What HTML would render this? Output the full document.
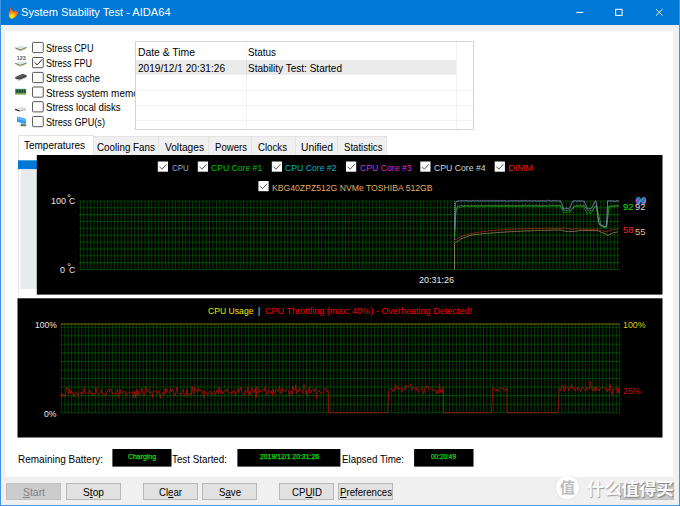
<!DOCTYPE html>
<html><head><meta charset="utf-8"><title>System Stability Test - AIDA64</title>
<style>
html,body{margin:0;padding:0}
body{width:680px;height:506px;position:relative;overflow:hidden;background:#f0f0f0;font-family:"Liberation Sans", sans-serif;}
.abs,.t,.cb,.btn,.box{position:absolute}
.t{white-space:nowrap;transform-origin:0 50%;}
u{text-decoration:underline;text-underline-offset:1px;text-decoration-thickness:.7px}
#title{left:0;top:0;width:680px;height:24.5px;background:#0078d7}
#frame{left:0;top:0;width:678px;height:505px;border:1px solid #3f95e0;border-top:none}
#panel{left:5.5px;top:31.5px;width:667.5px;height:445.5px;background:#fff}
.cb{left:32.1px;width:9.6px;height:9.2px;border:1px solid #3c3c3c;background:#fff;border-radius:.8px}
#list{z-index:2;left:134.5px;top:41.2px;width:337.5px;height:86.8px;border:1px solid #d4d4d4;background:#fff;overflow:hidden}
.btn{top:483px;height:14.6px;border:1px solid #b8b8b8;background:#e1e1e1}
.box{top:449px;height:17.4px;background:#000}
.tab{position:absolute;top:136.3px;height:18.2px;border:1px solid #e4e4e4;border-bottom:none;border-left:none;background:#f0f0f0}
</style></head><body>
<div class="abs" id="title"></div>
<div class="abs" id="frame"></div>
<svg class="abs" style="left:0;top:0" width="680" height="506" viewBox="0 0 680 506"><rect x="5.500" y="31.400" width="667.600" height="445.400" fill="#fff"/></svg>
<svg class="abs" style="left:0;top:0" width="680" height="25" viewBox="0 0 680 25">
<defs><radialGradient id="fl" cx="12.2" cy="16.6" r="8.5" gradientUnits="userSpaceOnUse"><stop offset="0" stop-color="#fff000"/><stop offset=".22" stop-color="#ffd200"/><stop offset=".5" stop-color="#ff8a12"/><stop offset="1" stop-color="#f2481c"/></radialGradient></defs>
<path d="M10.300 6.200C10.800 8.600 12.200 10.200 13.700 12.300L15.400 9.500L15.900 12L18.300 10.400C18.400 13 17.100 15.500 14.600 17.300C13.500 18.200 12.500 18.900 11.600 18.800C10.100 18.300 8.600 16.800 8.800 15L9.300 13.700L8.200 12.700L9.600 12.200C10 10.500 10.200 8.500 10.300 6.200Z" fill="url(#fl)"/>
<path d="M576.200 12.400h7.100" stroke="#fff" stroke-width="1" fill="none"/>
<rect x="615.700" y="9.300" width="6.400" height="6.100" stroke="#fff" stroke-width="1" fill="none"/>
<path d="M656 9.200l6.600 6.400M662.600 9.200l-6.600 6.400" stroke="#fff" stroke-width=".9" fill="none"/>
</svg>
<svg class="abs" style="left:0;top:36px" width="60" height="100" viewBox="0 36 60 100"><rect x="32.55" y="42.40" width="10.7" height="10.2" rx=".9" fill="#fff" stroke="#444" stroke-width=".9"/><rect x="32.55" y="57.50" width="10.7" height="10.2" rx=".9" fill="#fff" stroke="#444" stroke-width=".9"/><rect x="32.55" y="72.40" width="10.7" height="10.2" rx=".9" fill="#fff" stroke="#444" stroke-width=".9"/><rect x="32.55" y="87.00" width="10.7" height="10.2" rx=".9" fill="#fff" stroke="#444" stroke-width=".9"/><rect x="32.55" y="101.70" width="10.7" height="10.2" rx=".9" fill="#fff" stroke="#444" stroke-width=".9"/><rect x="32.55" y="116.50" width="10.7" height="10.2" rx=".9" fill="#fff" stroke="#444" stroke-width=".9"/></svg>
<svg class="abs" style="left:32px;top:56px" width="13" height="13" viewBox="0 0 13 13"><path d="M2.600 6.300l2.500 2.600l5-5.500" stroke="#222" stroke-width="1" fill="none"/></svg>
<svg class="abs" style="left:12px;top:40px" width="20" height="92" viewBox="12 40 20 92">
<path d="M15.200 47.800L21.400 45.300L26.600 47.400L20.500 49.900Z" fill="#dde5de"/>
<path d="M15.200 47.900L20.500 50L26.600 47.500" stroke="#3f6048" stroke-width=".9" fill="none"/>
<path d="M15.600 48.900L20.500 50.900L26.300 48.500" stroke="#d0ba78" stroke-width=".7" fill="none"/>
<text x="16.800" y="60.300" font-size="5.400" font-weight="bold" fill="#5a5a5a" font-family='"Liberation Sans", sans-serif'>123</text>
<path d="M15.200 63.300L21.400 61L26.600 62.900L20.500 65.300Z" fill="#dde5de"/>
<path d="M15.200 63.400L20.500 65.400L26.600 63" stroke="#3f6048" stroke-width=".9" fill="none"/>
<path d="M15.600 64.400L20.500 66.300L26.300 64" stroke="#d0ba78" stroke-width=".7" fill="none"/>
<path d="M15.200 77.300L22.300 74L26.600 75.200V77L19.600 79.800L15.200 78.600Z" fill="#3e3e3e"/>
<path d="M15.200 77.300L22.300 74L26.600 75.200L19.600 78.300Z" fill="#585858"/>
<path d="M16 79.400l3.500 1l7-2.800" stroke="#c4c4c4" stroke-width=".8" fill="none"/>
<rect x="15.100" y="88.800" width="11.100" height="5.600" fill="#3c9c62"/>
<path d="M16.300 89.800h1.900v3h-1.900zM18.900 89.800h1.900v3h-1.900zM21.500 89.800h1.900v3h-1.900zM24 89.800h1.500v3h-1.500z" fill="#2c3a30"/>
<path d="M15.600 93.600h4.600v.9h-4.600zM21.400 93.600h4.600v.9h-4.600z" fill="#c9a938"/>
<path d="M15.100 108.800L21.500 106.700L26.200 107.400V108.700L19.800 110.300Z" fill="#e4e4e4"/>
<path d="M15.100 108.800L19.800 110.300V111.600L15.100 110.300Z" fill="#2e2e2e"/>
<path d="M19.800 110.300L26.200 108.700V110L19.800 111.600Z" fill="#b8b8b8"/>
<path d="M17 116.400L25.900 118.800V124.200L17 121.800Z" fill="#2f9cf0"/>
<path d="M17.500 117.100L25.300 119.200V121.200L17.500 119.300Z" fill="#5cb8fa"/>
<path d="M21 123.400L26.200 124.600V126.200H20.300Z" fill="#5d7d68"/>
</svg>
<div class="abs" id="list">
<div class="abs" style="left:0;top:18px;width:320.500px;height:14.800px;background:#ebebeb"></div>
<div class="abs" style="left:0;top:47.700px;width:338px;height:1px;background:#f2f2f2"></div>
<div class="abs" style="left:0;top:62.900px;width:338px;height:1px;background:#f2f2f2"></div>
<div class="abs" style="left:0;top:78.100px;width:338px;height:1px;background:#f2f2f2"></div>
<div class="abs" style="left:110.500px;top:0;width:1px;height:88px;background:rgba(0,0,0,.045)"></div>
<div class="abs" style="left:320.500px;top:0;width:1px;height:88px;background:rgba(0,0,0,.05)"></div>
</div>
<!-- tabs -->
<div class="tab" style="left:92.5px;width:65.8px"></div>
<div class="tab" style="left:159.3px;width:48.5px"></div>
<div class="tab" style="left:208.8px;width:42.6px"></div>
<div class="tab" style="left:252.4px;width:42.2px"></div>
<div class="tab" style="left:295.6px;width:41.6px"></div>
<div class="tab" style="left:338.2px;width:48.2px"></div>
<div class="abs" style="left:17.500px;top:134.500px;width:74px;height:21px;border:1px solid #e2e2e2;border-bottom:none;background:#fff"></div>
<div class="abs" style="left:17.500px;top:155px;width:20px;height:140px;border-left:1px solid #e6e6e6;background:#fff"></div>
<!-- graphs -->
<svg class="abs" style="left:0;top:0" width="680" height="506" viewBox="0 0 680 506">
<rect x="18" y="160.300" width="19" height="8.900" fill="#0078d7"/>
<rect x="20.700" y="170" width="16.300" height="119" fill="#e8ebec"/>
<rect x="36.800" y="155" width="625.700" height="139.600" fill="#000"/>
<rect x="17.500" y="298.300" width="645" height="139.200" fill="#000"/>
<rect x="112.400" y="449" width="59.100" height="17.600" fill="#000"/>
<rect x="237.400" y="449" width="103" height="17.600" fill="#000"/>
<rect x="414.100" y="449" width="59.400" height="17.600" fill="#000"/>
</svg>
<svg class="abs" style="left:0;top:150px" width="680" height="290" viewBox="0 150 680 290">
<path d="M80.40 200.90V269.50M83.80 200.90V269.50M87.20 200.90V269.50M90.60 200.90V269.50M94.00 200.90V269.50M97.40 200.90V269.50M100.80 200.90V269.50M104.20 200.90V269.50M107.60 200.90V269.50M111.00 200.90V269.50M114.40 200.90V269.50M117.80 200.90V269.50M121.20 200.90V269.50M124.60 200.90V269.50M128.00 200.90V269.50M131.40 200.90V269.50M134.80 200.90V269.50M138.20 200.90V269.50M141.60 200.90V269.50M145.00 200.90V269.50M148.40 200.90V269.50M151.80 200.90V269.50M155.20 200.90V269.50M158.60 200.90V269.50M162.00 200.90V269.50M165.40 200.90V269.50M168.80 200.90V269.50M172.20 200.90V269.50M175.60 200.90V269.50M179.00 200.90V269.50M182.40 200.90V269.50M185.80 200.90V269.50M189.20 200.90V269.50M192.60 200.90V269.50M196.00 200.90V269.50M199.40 200.90V269.50M202.80 200.90V269.50M206.20 200.90V269.50M209.60 200.90V269.50M213.00 200.90V269.50M216.40 200.90V269.50M219.80 200.90V269.50M223.20 200.90V269.50M226.60 200.90V269.50M230.00 200.90V269.50M233.40 200.90V269.50M236.80 200.90V269.50M240.20 200.90V269.50M243.60 200.90V269.50M247.00 200.90V269.50M250.40 200.90V269.50M253.80 200.90V269.50M257.20 200.90V269.50M260.60 200.90V269.50M264.00 200.90V269.50M267.40 200.90V269.50M270.80 200.90V269.50M274.20 200.90V269.50M277.60 200.90V269.50M281.00 200.90V269.50M284.40 200.90V269.50M287.80 200.90V269.50M291.20 200.90V269.50M294.60 200.90V269.50M298.00 200.90V269.50M301.40 200.90V269.50M304.80 200.90V269.50M308.20 200.90V269.50M311.60 200.90V269.50M315.00 200.90V269.50M318.40 200.90V269.50M321.80 200.90V269.50M325.20 200.90V269.50M328.60 200.90V269.50M332.00 200.90V269.50M335.40 200.90V269.50M338.80 200.90V269.50M342.20 200.90V269.50M345.60 200.90V269.50M349.00 200.90V269.50M352.40 200.90V269.50M355.80 200.90V269.50M359.20 200.90V269.50M362.60 200.90V269.50M366.00 200.90V269.50M369.40 200.90V269.50M372.80 200.90V269.50M376.20 200.90V269.50M379.60 200.90V269.50M383.00 200.90V269.50M386.40 200.90V269.50M389.80 200.90V269.50M393.20 200.90V269.50M396.60 200.90V269.50M400.00 200.90V269.50M403.40 200.90V269.50M406.80 200.90V269.50M410.20 200.90V269.50M413.60 200.90V269.50M417.00 200.90V269.50M420.40 200.90V269.50M423.80 200.90V269.50M427.20 200.90V269.50M430.60 200.90V269.50M434.00 200.90V269.50M437.40 200.90V269.50M440.80 200.90V269.50M444.20 200.90V269.50M447.60 200.90V269.50M451.00 200.90V269.50M454.40 200.90V269.50M457.80 200.90V269.50M461.20 200.90V269.50M464.60 200.90V269.50M468.00 200.90V269.50M471.40 200.90V269.50M474.80 200.90V269.50M478.20 200.90V269.50M481.60 200.90V269.50M485.00 200.90V269.50M488.40 200.90V269.50M491.80 200.90V269.50M495.20 200.90V269.50M498.60 200.90V269.50M502.00 200.90V269.50M505.40 200.90V269.50M508.80 200.90V269.50M512.20 200.90V269.50M515.60 200.90V269.50M519.00 200.90V269.50M522.40 200.90V269.50M525.80 200.90V269.50M529.20 200.90V269.50M532.60 200.90V269.50M536.00 200.90V269.50M539.40 200.90V269.50M542.80 200.90V269.50M546.20 200.90V269.50M549.60 200.90V269.50M553.00 200.90V269.50M556.40 200.90V269.50M559.80 200.90V269.50M563.20 200.90V269.50M566.60 200.90V269.50M570.00 200.90V269.50M573.40 200.90V269.50M576.80 200.90V269.50M580.20 200.90V269.50M583.60 200.90V269.50M587.00 200.90V269.50M590.40 200.90V269.50M593.80 200.90V269.50M597.20 200.90V269.50M600.60 200.90V269.50M604.00 200.90V269.50M607.40 200.90V269.50M610.80 200.90V269.50M614.20 200.90V269.50M617.60 200.90V269.50" stroke="#00b000" stroke-opacity="0.33" stroke-width="1.05" fill="none"/><path d="M79.30 200.90H619.90M79.30 207.76H619.90M79.30 214.62H619.90M79.30 221.48H619.90M79.30 228.34H619.90M79.30 235.20H619.90M79.30 242.06H619.90M79.30 248.92H619.90M79.30 255.78H619.90M79.30 262.64H619.90M79.30 269.50H619.90" stroke="#00b000" stroke-opacity="0.33" stroke-width="1.05" fill="none"/>
<path d="M454.600 201V269.500" stroke="#b8b0c8" stroke-width=".6" stroke-opacity=".85" stroke-dasharray="1 1" fill="none"/>
<path d="M454.600 243.500V269.500" stroke="#b09468" stroke-width=".7" fill="none"/>
<polyline points="454.6,240.2 456.1,239.4 457.6,238.4 459.1,237.7 460.6,236.9 462.1,236.0 463.6,235.6 465.1,235.4 466.6,234.8 468.1,234.4 469.6,234.2 471.1,233.7 472.6,233.5 474.1,233.1 475.6,232.9 477.1,232.4 478.6,232.3 480.1,232.1 481.6,231.8 483.1,231.7 484.6,231.5 486.1,231.1 487.6,231.1 489.1,230.8 490.6,230.6 492.1,230.4 493.6,230.6 495.1,230.3 496.6,230.3 498.1,230.2 499.6,230.1 501.1,230.0 502.6,229.8 504.1,229.8 505.6,229.6 507.1,229.6 508.6,229.5 510.1,229.2 511.6,229.1 513.1,229.1 514.6,229.3 516.1,229.1 517.6,229.1 519.1,228.9 520.6,228.9 522.1,228.9 523.6,228.8 525.1,228.8 526.6,228.8 528.1,228.8 529.6,228.7 531.1,228.7 532.6,228.7 534.1,228.6 535.6,228.5 537.1,228.3 538.6,228.5 540.1,228.4 541.6,228.4 543.1,228.3 544.6,228.3 546.1,228.2 547.6,228.3 549.1,228.2 550.6,228.2 552.1,228.1 553.6,228.3 555.1,228.3 556.6,228.0 558.1,228.2 559.6,228.1 561.1,228.0 562.6,228.1 564.1,228.2 565.6,228.3 567.1,228.4 568.6,228.9 570.1,229.1 571.6,229.4 573.1,229.1 574.6,229.0 576.1,228.9 577.6,228.6 579.1,228.9 580.6,228.8 582.1,228.9 583.6,229.1 585.1,229.1 586.6,229.2 588.1,229.4 589.6,229.6 591.1,229.4 592.6,229.2 594.1,229.4 595.6,229.1 597.1,229.2 598.6,229.7 600.1,230.0 601.6,230.6 603.1,231.2 604.6,231.8 606.1,231.6 607.6,231.2 609.1,230.9 610.6,230.6 612.1,230.1 613.6,229.7 615.1,229.6 616.6,229.3 618.1,229.1" stroke="#b0281c" stroke-width="0.75" stroke-opacity="1" fill="none" stroke-linejoin="round"/>
<polyline points="454.6,243.4 456.1,242.3 457.6,241.3 459.1,240.2 460.6,239.2 462.1,238.4 463.6,238.0 465.1,237.4 466.6,236.9 468.1,236.1 469.6,235.7 471.1,235.3 472.6,235.0 474.1,234.8 475.6,234.6 477.1,234.6 478.6,234.3 480.1,234.1 481.6,233.9 483.1,233.6 484.6,233.5 486.1,233.5 487.6,233.4 489.1,233.3 490.6,233.2 492.1,232.8 493.6,232.9 495.1,232.8 496.6,232.6 498.1,232.4 499.6,232.4 501.1,232.2 502.6,232.3 504.1,232.2 505.6,232.0 507.1,231.8 508.6,231.9 510.1,231.7 511.6,231.7 513.1,231.7 514.6,231.5 516.1,231.4 517.6,231.4 519.1,231.3 520.6,231.1 522.1,231.1 523.6,231.2 525.1,230.9 526.6,230.8 528.1,231.0 529.6,230.8 531.1,230.8 532.6,230.7 534.1,230.6 535.6,230.7 537.1,230.4 538.6,230.4 540.1,230.3 541.6,230.4 543.1,230.3 544.6,230.3 546.1,230.4 547.6,230.2 549.1,230.2 550.6,230.3 552.1,230.0 553.6,230.0 555.1,230.0 556.6,230.1 558.1,230.1 559.6,229.9 561.1,230.2 562.6,230.6 564.1,231.0 565.6,231.3 567.1,231.5 568.6,231.6 570.1,231.6 571.6,231.5 573.1,231.6 574.6,231.3 576.1,231.1 577.6,231.0 579.1,230.6 580.6,230.3 582.1,230.5 583.6,230.4 585.1,230.5 586.6,230.4 588.1,230.4 589.6,230.5 591.1,230.4 592.6,230.5 594.1,230.7 595.6,230.5 597.1,230.5 598.6,231.1 600.1,231.7 601.6,232.5 603.1,233.0 604.6,233.6 606.1,234.2 607.6,235.2 609.1,234.7 610.6,234.0 612.1,233.3 613.6,232.7 615.1,232.4 616.6,232.2 618.1,231.7" stroke="#a88a5c" stroke-width="0.75" stroke-opacity="1" fill="none" stroke-linejoin="round"/>
<polyline points="454.6,240.2 455.4,219.2 456.1,210.5 456.9,208.2 457.6,206.1 458.4,206.3 459.1,205.9 459.9,205.8 460.6,205.5 461.4,205.8 462.1,205.4 462.9,205.8 463.6,205.8 464.4,205.5 465.1,205.6 465.9,205.7 466.6,205.4 467.4,205.6 468.1,205.8 468.9,205.4 469.6,205.8 470.4,205.7 471.1,205.8 471.9,205.5 472.6,205.3 473.4,205.8 474.1,205.8 474.9,205.5 475.6,205.3 476.4,205.4 477.1,205.7 477.9,205.4 478.6,205.9 479.4,205.6 480.1,205.4 480.9,205.7 481.6,205.5 482.4,205.9 483.1,205.8 483.9,205.6 484.6,205.7 485.4,205.7 486.1,205.8 486.9,205.9 487.6,205.2 488.4,205.4 489.1,205.6 489.9,205.4 490.6,205.6 491.4,205.3 492.1,205.8 492.9,205.6 493.6,205.3 494.4,205.6 495.1,205.4 495.9,205.3 496.6,205.5 497.4,205.3 498.1,205.3 498.9,205.8 499.6,205.7 500.4,205.2 501.1,205.7 501.9,205.2 502.6,205.4 503.4,205.8 504.1,205.6 504.9,205.4 505.6,205.4 506.4,205.4 507.1,205.2 507.9,205.9 508.6,205.2 509.4,205.4 510.1,205.7 510.9,205.4 511.6,205.8 512.4,205.3 513.1,205.8 513.9,205.8 514.6,205.6 515.4,205.8 516.1,205.5 516.9,205.7 517.6,205.7 518.4,205.5 519.1,205.5 519.9,205.6 520.6,205.4 521.4,205.2 522.1,205.6 522.9,205.3 523.6,205.5 524.4,205.7 525.1,205.2 525.9,205.1 526.6,205.2 527.4,205.5 528.1,205.4 528.9,205.3 529.6,205.4 530.4,205.8 531.1,205.3 531.9,205.4 532.6,205.7 533.4,205.5 534.1,205.3 534.9,205.4 535.6,205.4 536.4,205.2 537.1,205.4 537.9,205.3 538.6,205.7 539.4,205.3 540.1,205.6 540.9,205.8 541.6,205.7 542.4,205.3 543.1,205.5 543.9,205.3 544.6,205.4 545.4,205.4 546.1,205.6 546.9,205.7 547.6,205.3 548.4,205.1 549.1,205.4 549.9,205.1 550.6,205.1 551.4,205.6 552.1,205.1 552.9,205.6 553.6,205.3 554.4,205.7 555.1,205.7 555.9,205.1 556.6,205.2 557.4,205.7 558.1,205.5 558.9,205.3 559.6,205.6 560.4,205.6 561.1,206.0 561.9,207.4 562.6,208.5 563.4,210.1 564.1,210.3 564.9,210.6 565.6,210.6 566.4,210.3 567.1,210.6 567.9,210.2 568.6,210.2 569.4,210.6 570.1,210.4 570.9,210.1 571.6,209.3 572.4,208.8 573.1,207.8 573.9,207.7 574.6,206.6 575.4,206.4 576.1,206.0 576.9,205.7 577.6,205.7 578.4,205.4 579.1,205.5 579.9,205.6 580.6,205.1 581.4,205.7 582.1,205.7 582.9,205.4 583.6,205.6 584.4,205.4 585.1,206.5 585.9,208.1 586.6,208.8 587.4,210.6 588.1,210.9 588.9,210.5 589.6,210.9 590.4,210.3 591.1,210.9 591.9,210.1 592.6,209.7 593.4,208.5 594.1,208.0 594.9,206.6 595.6,205.8 596.4,205.8 597.1,208.0 597.9,211.4 598.6,214.5 599.4,218.0 600.1,221.6 600.9,223.9 601.6,225.0 602.4,225.4 603.1,226.0 603.9,226.3 604.6,226.5 605.4,226.4 606.1,226.9 606.9,224.7 607.6,219.5 608.4,214.0 609.1,208.6 609.9,206.1 610.6,206.0 611.4,206.3 612.1,205.9 612.9,206.2 613.6,205.8 614.4,205.9 615.1,205.7 615.9,206.0 616.6,205.8 617.4,205.6 618.1,205.5 618.9,205.7" stroke="#c4c4c4" stroke-width="0.55" stroke-opacity="0.8" fill="none" stroke-linejoin="round"/>
<polyline points="454.6,236.1 455.4,213.8 456.1,210.6 456.9,208.9 457.6,208.1 458.4,208.2 459.1,207.1 459.9,207.2 460.6,207.3 461.4,206.7 462.1,206.9 462.9,206.1 463.6,206.5 464.4,206.2 465.1,206.5 465.9,206.6 466.6,205.9 467.4,206.2 468.1,206.2 468.9,206.9 469.6,206.8 470.4,206.1 471.1,206.8 471.9,206.1 472.6,206.6 473.4,206.1 474.1,205.9 474.9,206.9 475.6,206.1 476.4,206.1 477.1,207.0 477.9,206.9 478.6,206.2 479.4,207.0 480.1,206.5 480.9,206.6 481.6,206.1 482.4,206.9 483.1,206.6 483.9,206.9 484.6,206.9 485.4,206.2 486.1,206.3 486.9,206.1 487.6,206.0 488.4,205.9 489.1,206.2 489.9,206.5 490.6,205.9 491.4,206.6 492.1,206.2 492.9,206.2 493.6,206.8 494.4,206.4 495.1,206.2 495.9,206.4 496.6,206.6 497.4,205.9 498.1,206.9 498.9,205.9 499.6,206.7 500.4,206.8 501.1,205.8 501.9,206.7 502.6,206.2 503.4,206.5 504.1,205.8 504.9,205.9 505.6,206.0 506.4,206.9 507.1,206.0 507.9,206.6 508.6,206.8 509.4,206.8 510.1,206.2 510.9,206.2 511.6,206.4 512.4,206.6 513.1,205.9 513.9,206.6 514.6,206.7 515.4,206.7 516.1,205.8 516.9,206.8 517.6,205.9 518.4,206.2 519.1,206.4 519.9,206.8 520.6,206.1 521.4,206.8 522.1,206.4 522.9,206.1 523.6,206.1 524.4,206.0 525.1,205.8 525.9,205.9 526.6,206.5 527.4,206.8 528.1,205.9 528.9,205.8 529.6,206.8 530.4,206.3 531.1,206.2 531.9,206.0 532.6,206.4 533.4,206.6 534.1,206.2 534.9,206.2 535.6,205.8 536.4,206.7 537.1,205.8 537.9,206.3 538.6,206.6 539.4,205.9 540.1,206.5 540.9,206.8 541.6,206.4 542.4,206.6 543.1,205.8 543.9,206.2 544.6,205.9 545.4,206.6 546.1,206.0 546.9,206.2 547.6,206.8 548.4,206.6 549.1,206.8 549.9,206.2 550.6,206.2 551.4,206.5 552.1,206.2 552.9,206.0 553.6,206.1 554.4,205.8 555.1,206.1 555.9,206.8 556.6,206.7 557.4,206.3 558.1,206.2 558.9,206.0 559.6,205.8 560.4,206.0 561.1,207.8 561.9,209.7 562.6,211.0 563.4,212.5 564.1,212.5 564.9,212.4 565.6,212.4 566.4,212.5 567.1,212.0 567.9,212.4 568.6,212.0 569.4,212.2 570.1,212.3 570.9,211.0 571.6,209.2 572.4,208.7 573.1,207.1 573.9,206.3 574.6,205.7 575.4,206.3 576.1,205.9 576.9,206.4 577.6,206.2 578.4,206.5 579.1,206.4 579.9,206.5 580.6,206.0 581.4,206.4 582.1,206.5 582.9,206.6 583.6,206.0 584.4,207.5 585.1,209.5 585.9,211.3 586.6,213.3 587.4,213.3 588.1,212.8 588.9,212.8 589.6,212.4 590.4,213.2 591.1,213.3 591.9,212.1 592.6,210.9 593.4,209.6 594.1,208.2 594.9,206.1 595.6,206.5 596.4,206.3 597.1,211.0 597.9,215.6 598.6,220.7 599.4,224.9 600.1,225.2 600.9,225.8 601.6,225.5 602.4,226.2 603.1,227.0 603.9,227.7 604.6,227.3 605.4,227.8 606.1,227.7 606.9,223.2 607.6,215.4 608.4,206.9 609.1,206.1 609.9,206.1 610.6,206.3 611.4,206.1 612.1,206.1 612.9,205.9 613.6,206.3 614.4,206.2 615.1,206.4 615.9,206.3 616.6,205.9 617.4,206.6 618.1,205.5 618.9,206.0" stroke="#00b400" stroke-width="0.75" stroke-opacity="1" fill="none" stroke-linejoin="round"/>
<polyline points="454.6,230.2 455.4,202.9 456.1,202.8 456.9,201.5 457.6,201.7 458.4,201.3 459.1,200.9 459.9,201.3 460.6,200.8 461.4,201.2 462.1,200.9 462.9,200.9 463.6,201.2 464.4,201.6 465.1,200.9 465.9,201.0 466.6,201.4 467.4,201.7 468.1,201.4 468.9,201.2 469.6,201.8 470.4,200.8 471.1,201.7 471.9,201.1 472.6,200.9 473.4,200.9 474.1,201.1 474.9,201.6 475.6,201.0 476.4,201.4 477.1,201.4 477.9,201.2 478.6,201.3 479.4,200.9 480.1,200.9 480.9,201.0 481.6,201.5 482.4,201.2 483.1,201.1 483.9,201.4 484.6,201.3 485.4,201.1 486.1,201.6 486.9,201.5 487.6,201.0 488.4,201.4 489.1,201.3 489.9,201.7 490.6,201.5 491.4,201.1 492.1,201.8 492.9,200.9 493.6,201.2 494.4,201.6 495.1,201.0 495.9,201.3 496.6,200.8 497.4,201.5 498.1,201.6 498.9,201.4 499.6,201.7 500.4,201.1 501.1,201.5 501.9,201.4 502.6,201.4 503.4,201.3 504.1,201.6 504.9,201.7 505.6,201.3 506.4,201.5 507.1,200.9 507.9,201.5 508.6,201.4 509.4,201.8 510.1,201.6 510.9,201.1 511.6,201.2 512.4,201.5 513.1,200.8 513.9,201.3 514.6,201.0 515.4,200.9 516.1,200.9 516.9,201.6 517.6,200.9 518.4,201.0 519.1,201.2 519.9,201.7 520.6,200.9 521.4,201.2 522.1,201.3 522.9,201.7 523.6,201.6 524.4,201.7 525.1,201.1 525.9,201.2 526.6,201.2 527.4,201.7 528.1,201.8 528.9,201.0 529.6,201.0 530.4,201.0 531.1,201.0 531.9,201.3 532.6,201.4 533.4,201.1 534.1,200.8 534.9,201.2 535.6,201.2 536.4,201.4 537.1,201.8 537.9,201.5 538.6,201.3 539.4,201.4 540.1,201.5 540.9,200.9 541.6,201.7 542.4,201.6 543.1,201.7 543.9,201.6 544.6,201.2 545.4,201.2 546.1,200.9 546.9,201.4 547.6,200.9 548.4,200.9 549.1,201.0 549.9,201.0 550.6,201.1 551.4,200.9 552.1,200.8 552.9,201.0 553.6,200.9 554.4,201.2 555.1,200.8 555.9,201.7 556.6,201.4 557.4,200.9 558.1,201.1 558.9,201.1 559.6,201.2 560.4,200.9 561.1,203.0 561.9,205.2 562.6,206.6 563.4,208.7 564.1,208.7 564.9,208.7 565.6,208.9 566.4,208.9 567.1,209.4 567.9,208.8 568.6,208.6 569.4,209.6 570.1,207.6 570.9,205.6 571.6,204.4 572.4,202.2 573.1,201.3 573.9,201.8 574.6,201.7 575.4,201.5 576.1,201.1 576.9,201.2 577.6,201.0 578.4,201.6 579.1,201.3 579.9,201.6 580.6,201.1 581.4,201.0 582.1,201.6 582.9,201.8 583.6,201.7 584.4,202.4 585.1,204.1 585.9,205.7 586.6,206.8 587.4,208.8 588.1,209.0 588.9,208.6 589.6,208.6 590.4,208.9 591.1,208.7 591.9,207.8 592.6,206.7 593.4,204.8 594.1,203.9 594.9,202.6 595.6,201.8 596.4,204.1 597.1,210.1 597.9,216.3 598.6,222.4 599.4,224.4 600.1,225.3 600.9,226.0 601.6,226.4 602.4,226.4 603.1,227.0 603.9,227.6 604.6,227.0 605.4,227.6 606.1,227.8 606.9,219.4 607.6,201.6 608.4,201.3 609.1,201.0 609.9,201.6 610.6,201.1 611.4,201.6 612.1,201.8 612.9,201.2 613.6,201.2 614.4,201.7 615.1,201.5 615.9,201.0 616.6,200.9 617.4,201.0 618.1,201.7 618.9,201.6" stroke="#8090e8" stroke-width="0.5" stroke-opacity="0.45" fill="none" stroke-linejoin="round"/>
<polyline points="454.6,229.7 455.4,203.4 456.1,201.8 456.9,201.8 457.6,200.8 458.4,200.8 459.1,201.4 459.9,200.6 460.6,201.1 461.4,200.9 462.1,200.8 462.9,200.9 463.6,200.6 464.4,201.3 465.1,200.4 465.9,200.6 466.6,200.4 467.4,200.6 468.1,200.8 468.9,201.3 469.6,200.8 470.4,200.5 471.1,200.6 471.9,201.4 472.6,200.4 473.4,201.0 474.1,200.8 474.9,201.1 475.6,200.7 476.4,201.1 477.1,200.9 477.9,201.1 478.6,201.3 479.4,201.0 480.1,200.5 480.9,200.4 481.6,201.4 482.4,200.9 483.1,200.6 483.9,201.4 484.6,201.0 485.4,201.2 486.1,201.3 486.9,200.7 487.6,200.7 488.4,201.3 489.1,200.5 489.9,201.2 490.6,200.5 491.4,201.1 492.1,201.1 492.9,201.4 493.6,201.3 494.4,200.9 495.1,200.6 495.9,200.5 496.6,200.9 497.4,200.9 498.1,200.4 498.9,201.3 499.6,200.9 500.4,201.1 501.1,200.6 501.9,200.6 502.6,200.4 503.4,200.7 504.1,200.6 504.9,200.8 505.6,200.8 506.4,201.3 507.1,201.3 507.9,200.5 508.6,200.8 509.4,200.5 510.1,201.1 510.9,201.4 511.6,200.6 512.4,201.2 513.1,200.7 513.9,200.4 514.6,201.2 515.4,200.7 516.1,200.5 516.9,200.8 517.6,200.6 518.4,200.8 519.1,200.8 519.9,200.8 520.6,201.0 521.4,200.7 522.1,200.5 522.9,200.4 523.6,200.5 524.4,200.9 525.1,200.7 525.9,201.2 526.6,200.9 527.4,201.1 528.1,201.4 528.9,200.4 529.6,200.4 530.4,200.5 531.1,200.8 531.9,201.0 532.6,201.2 533.4,200.7 534.1,201.4 534.9,200.4 535.6,201.3 536.4,200.6 537.1,201.3 537.9,200.4 538.6,201.4 539.4,201.2 540.1,201.4 540.9,201.0 541.6,200.5 542.4,201.4 543.1,200.8 543.9,200.4 544.6,201.0 545.4,200.9 546.1,200.9 546.9,200.5 547.6,200.5 548.4,201.0 549.1,200.8 549.9,200.5 550.6,200.8 551.4,201.1 552.1,201.1 552.9,200.9 553.6,200.8 554.4,200.7 555.1,200.6 555.9,200.6 556.6,200.8 557.4,200.5 558.1,201.1 558.9,201.1 559.6,201.0 560.4,200.4 561.1,202.1 561.9,204.2 562.6,205.8 563.4,208.8 564.1,209.0 564.9,208.7 565.6,208.9 566.4,208.4 567.1,208.4 567.9,208.7 568.6,209.0 569.4,208.9 570.1,206.6 570.9,205.7 571.6,204.4 572.4,202.6 573.1,201.4 573.9,201.4 574.6,200.6 575.4,200.7 576.1,201.0 576.9,201.4 577.6,200.8 578.4,201.4 579.1,201.3 579.9,200.9 580.6,201.0 581.4,201.4 582.1,201.2 582.9,200.7 583.6,201.3 584.4,201.3 585.1,203.2 585.9,205.5 586.6,207.1 587.4,208.2 588.1,208.5 588.9,208.8 589.6,209.1 590.4,208.9 591.1,209.0 591.9,207.4 592.6,206.2 593.4,204.6 594.1,202.9 594.9,201.6 595.6,200.9 596.4,203.8 597.1,210.3 597.9,215.9 598.6,221.9 599.4,224.6 600.1,224.5 600.9,225.1 601.6,225.2 602.4,226.4 603.1,226.2 603.9,226.7 604.6,227.3 605.4,227.0 606.1,226.8 606.9,219.1 607.6,200.8 608.4,200.7 609.1,201.4 609.9,201.2 610.6,201.2 611.4,200.6 612.1,201.2 612.9,201.0 613.6,201.3 614.4,200.8 615.1,201.2 615.9,201.2 616.6,200.8 617.4,201.1 618.1,201.2 618.9,201.4" stroke="#00b8c8" stroke-width="0.5" stroke-opacity="0.6" fill="none" stroke-linejoin="round"/>
<polyline points="454.6,229.9 455.4,202.6 456.1,201.7 456.9,201.8 457.6,200.6 458.4,201.0 459.1,201.2 459.9,200.3 460.6,200.9 461.4,200.9 462.1,200.3 462.9,200.7 463.6,201.0 464.4,200.7 465.1,201.0 465.9,200.4 466.6,200.5 467.4,200.4 468.1,200.8 468.9,201.3 469.6,200.9 470.4,201.1 471.1,200.7 471.9,201.1 472.6,200.4 473.4,200.6 474.1,201.0 474.9,201.0 475.6,200.7 476.4,200.3 477.1,200.5 477.9,200.5 478.6,200.6 479.4,201.1 480.1,200.5 480.9,201.2 481.6,201.2 482.4,200.3 483.1,200.7 483.9,200.8 484.6,200.3 485.4,200.7 486.1,201.2 486.9,200.4 487.6,200.9 488.4,200.4 489.1,200.9 489.9,201.2 490.6,200.5 491.4,200.3 492.1,200.3 492.9,200.8 493.6,200.3 494.4,200.3 495.1,200.8 495.9,201.3 496.6,200.7 497.4,200.7 498.1,201.0 498.9,200.4 499.6,200.9 500.4,200.4 501.1,200.9 501.9,201.3 502.6,200.3 503.4,200.9 504.1,200.9 504.9,200.4 505.6,200.5 506.4,201.3 507.1,201.3 507.9,200.4 508.6,201.0 509.4,201.3 510.1,200.5 510.9,200.9 511.6,200.3 512.4,200.7 513.1,201.0 513.9,200.9 514.6,201.1 515.4,200.3 516.1,200.6 516.9,201.2 517.6,200.9 518.4,200.7 519.1,200.7 519.9,201.3 520.6,200.9 521.4,200.3 522.1,201.1 522.9,200.6 523.6,200.7 524.4,200.5 525.1,200.7 525.9,200.6 526.6,200.3 527.4,200.9 528.1,200.4 528.9,201.1 529.6,200.3 530.4,201.1 531.1,201.1 531.9,200.8 532.6,201.0 533.4,200.5 534.1,201.1 534.9,200.7 535.6,200.5 536.4,201.3 537.1,200.7 537.9,200.7 538.6,201.2 539.4,200.7 540.1,201.0 540.9,200.4 541.6,201.2 542.4,200.5 543.1,200.3 543.9,201.3 544.6,200.4 545.4,201.3 546.1,201.3 546.9,200.9 547.6,200.3 548.4,200.3 549.1,200.5 549.9,200.7 550.6,200.9 551.4,201.3 552.1,200.6 552.9,200.4 553.6,200.9 554.4,200.4 555.1,200.3 555.9,200.9 556.6,201.0 557.4,200.3 558.1,200.7 558.9,201.0 559.6,201.1 560.4,200.7 561.1,202.6 561.9,203.8 562.6,206.4 563.4,208.5 564.1,209.0 564.9,208.6 565.6,208.2 566.4,208.1 567.1,208.6 567.9,208.2 568.6,208.7 569.4,208.1 570.1,207.4 570.9,205.2 571.6,203.3 572.4,201.9 573.1,200.8 573.9,200.9 574.6,200.7 575.4,200.4 576.1,200.8 576.9,201.3 577.6,200.8 578.4,201.3 579.1,200.3 579.9,201.3 580.6,201.2 581.4,200.8 582.1,200.8 582.9,200.8 583.6,201.3 584.4,201.1 585.1,203.4 585.9,205.0 586.6,206.4 587.4,208.5 588.1,208.8 588.9,208.2 589.6,208.8 590.4,208.5 591.1,208.4 591.9,207.2 592.6,205.2 593.4,204.5 594.1,202.8 594.9,202.0 595.6,200.5 596.4,204.0 597.1,210.1 597.9,216.2 598.6,222.7 599.4,223.7 600.1,224.8 600.9,225.2 601.6,225.7 602.4,225.8 603.1,225.9 603.9,226.5 604.6,227.0 605.4,226.5 606.1,226.4 606.9,218.4 607.6,200.8 608.4,200.8 609.1,200.3 609.9,201.1 610.6,200.6 611.4,201.1 612.1,200.3 612.9,201.3 613.6,200.9 614.4,201.3 615.1,201.3 615.9,201.2 616.6,200.4 617.4,200.6 618.1,200.5 618.9,201.1" stroke="#d478dc" stroke-width="0.55" stroke-opacity="0.85" fill="none" stroke-linejoin="round"/>
<rect x="157.8" y="161.5" width="10.2" height="10.2" fill="#fff"/><path d="M159.4 166.7l2.5 2.5l4.6-5" stroke="#444" stroke-width=".9" fill="none"/>
<rect x="197.8" y="161.5" width="10.2" height="10.2" fill="#fff"/><path d="M199.4 166.7l2.5 2.5l4.6-5" stroke="#444" stroke-width=".9" fill="none"/>
<rect x="271.8" y="161.5" width="10.2" height="10.2" fill="#fff"/><path d="M273.4 166.7l2.5 2.5l4.6-5" stroke="#444" stroke-width=".9" fill="none"/>
<rect x="346.0" y="161.5" width="10.2" height="10.2" fill="#fff"/><path d="M347.6 166.7l2.5 2.5l4.6-5" stroke="#444" stroke-width=".9" fill="none"/>
<rect x="420.3" y="161.5" width="10.2" height="10.2" fill="#fff"/><path d="M421.9 166.7l2.5 2.5l4.6-5" stroke="#444" stroke-width=".9" fill="none"/>
<rect x="494.7" y="161.5" width="10.2" height="10.2" fill="#fff"/><path d="M496.3 166.7l2.5 2.5l4.6-5" stroke="#444" stroke-width=".9" fill="none"/>
<rect x="258.4" y="181.0" width="10.2" height="10.2" fill="#fff"/><path d="M260.0 186.2l2.5 2.5l4.6-5" stroke="#444" stroke-width=".9" fill="none"/>
<path d="M61.40 324.00V412.70M64.80 324.00V412.70M68.21 324.00V412.70M71.61 324.00V412.70M75.02 324.00V412.70M78.42 324.00V412.70M81.83 324.00V412.70M85.23 324.00V412.70M88.63 324.00V412.70M92.04 324.00V412.70M95.44 324.00V412.70M98.85 324.00V412.70M102.25 324.00V412.70M105.66 324.00V412.70M109.06 324.00V412.70M112.46 324.00V412.70M115.87 324.00V412.70M119.27 324.00V412.70M122.68 324.00V412.70M126.08 324.00V412.70M129.49 324.00V412.70M132.89 324.00V412.70M136.29 324.00V412.70M139.70 324.00V412.70M143.10 324.00V412.70M146.51 324.00V412.70M149.91 324.00V412.70M153.32 324.00V412.70M156.72 324.00V412.70M160.12 324.00V412.70M163.53 324.00V412.70M166.93 324.00V412.70M170.34 324.00V412.70M173.74 324.00V412.70M177.15 324.00V412.70M180.55 324.00V412.70M183.95 324.00V412.70M187.36 324.00V412.70M190.76 324.00V412.70M194.17 324.00V412.70M197.57 324.00V412.70M200.98 324.00V412.70M204.38 324.00V412.70M207.78 324.00V412.70M211.19 324.00V412.70M214.59 324.00V412.70M218.00 324.00V412.70M221.40 324.00V412.70M224.80 324.00V412.70M228.21 324.00V412.70M231.61 324.00V412.70M235.02 324.00V412.70M238.42 324.00V412.70M241.83 324.00V412.70M245.23 324.00V412.70M248.63 324.00V412.70M252.04 324.00V412.70M255.44 324.00V412.70M258.85 324.00V412.70M262.25 324.00V412.70M265.66 324.00V412.70M269.06 324.00V412.70M272.46 324.00V412.70M275.87 324.00V412.70M279.27 324.00V412.70M282.68 324.00V412.70M286.08 324.00V412.70M289.49 324.00V412.70M292.89 324.00V412.70M296.29 324.00V412.70M299.70 324.00V412.70M303.10 324.00V412.70M306.51 324.00V412.70M309.91 324.00V412.70M313.32 324.00V412.70M316.72 324.00V412.70M320.12 324.00V412.70M323.53 324.00V412.70M326.93 324.00V412.70M330.34 324.00V412.70M333.74 324.00V412.70M337.15 324.00V412.70M340.55 324.00V412.70M343.95 324.00V412.70M347.36 324.00V412.70M350.76 324.00V412.70M354.17 324.00V412.70M357.57 324.00V412.70M360.98 324.00V412.70M364.38 324.00V412.70M367.78 324.00V412.70M371.19 324.00V412.70M374.59 324.00V412.70M378.00 324.00V412.70M381.40 324.00V412.70M384.81 324.00V412.70M388.21 324.00V412.70M391.61 324.00V412.70M395.02 324.00V412.70M398.42 324.00V412.70M401.83 324.00V412.70M405.23 324.00V412.70M408.64 324.00V412.70M412.04 324.00V412.70M415.44 324.00V412.70M418.85 324.00V412.70M422.25 324.00V412.70M425.66 324.00V412.70M429.06 324.00V412.70M432.47 324.00V412.70M435.87 324.00V412.70M439.27 324.00V412.70M442.68 324.00V412.70M446.08 324.00V412.70M449.49 324.00V412.70M452.89 324.00V412.70M456.30 324.00V412.70M459.70 324.00V412.70M463.10 324.00V412.70M466.51 324.00V412.70M469.91 324.00V412.70M473.32 324.00V412.70M476.72 324.00V412.70M480.13 324.00V412.70M483.53 324.00V412.70M486.93 324.00V412.70M490.34 324.00V412.70M493.74 324.00V412.70M497.15 324.00V412.70M500.55 324.00V412.70M503.95 324.00V412.70M507.36 324.00V412.70M510.76 324.00V412.70M514.17 324.00V412.70M517.57 324.00V412.70M520.98 324.00V412.70M524.38 324.00V412.70M527.78 324.00V412.70M531.19 324.00V412.70M534.59 324.00V412.70M538.00 324.00V412.70M541.40 324.00V412.70M544.81 324.00V412.70M548.21 324.00V412.70M551.61 324.00V412.70M555.02 324.00V412.70M558.42 324.00V412.70M561.83 324.00V412.70M565.23 324.00V412.70M568.64 324.00V412.70M572.04 324.00V412.70M575.44 324.00V412.70M578.85 324.00V412.70M582.25 324.00V412.70M585.66 324.00V412.70M589.06 324.00V412.70M592.47 324.00V412.70M595.87 324.00V412.70M599.27 324.00V412.70M602.68 324.00V412.70M606.08 324.00V412.70M609.49 324.00V412.70M612.89 324.00V412.70M616.30 324.00V412.70M619.70 324.00V412.70" stroke="#00b000" stroke-opacity="0.33" stroke-width="1.05" fill="none"/><path d="M60.60 412.70H619.90M60.60 404.15H619.90M60.60 395.60H619.90M60.60 387.05H619.90M60.60 378.50H619.90M60.60 369.95H619.90M60.60 361.40H619.90M60.60 352.85H619.90M60.60 344.30H619.90M60.60 335.75H619.90M60.60 327.20H619.90" stroke="#00b000" stroke-opacity="0.33" stroke-width="1.05" fill="none"/>
<path d="M60.6 324H619.9" stroke="#84840c" stroke-width=".9" fill="none"/>
<polyline points="60.8,396.5 61.7,392.8 62.6,396.7 63.5,393.8 64.4,396.4 65.3,396.6 66.2,390.0 67.1,386.9 68.0,390.3 68.9,394.3 69.8,388.5 70.7,393.3 71.6,391.0 72.5,393.0 73.4,396.8 74.3,393.9 75.2,395.3 76.1,393.0 77.0,391.5 77.9,396.5 78.8,393.7 79.7,392.6 80.6,392.1 81.5,395.3 82.4,391.8 83.3,393.4 84.2,387.7 85.1,393.7 86.0,393.5 86.9,392.4 87.8,393.3 88.7,394.5 89.6,389.5 90.5,391.8 91.4,394.8 92.3,392.8 93.2,394.0 94.1,394.2 95.0,394.1 95.9,387.2 96.8,392.1 97.7,394.3 98.6,393.9 99.5,394.1 100.4,393.5 101.3,389.3 102.2,392.3 103.1,392.8 104.0,395.0 104.9,394.5 105.8,396.2 106.7,392.9 107.6,390.3 108.5,389.0 109.4,391.8 110.3,389.6 111.2,388.6 112.1,394.6 113.0,392.6 113.9,392.7 114.8,393.6 115.7,394.8 116.6,393.5 117.5,389.3 118.4,397.3 119.3,394.7 120.2,389.2 121.1,393.8 122.0,391.7 122.9,392.5 123.8,391.5 124.7,391.4 125.6,394.9 126.5,395.9 127.4,392.6 128.3,392.9 129.2,392.5 130.1,393.1 131.0,393.2 131.9,391.7 132.8,393.3 133.7,397.9 134.6,391.5 135.5,397.8 136.4,389.1 137.3,395.6 138.2,390.9 139.1,395.1 140.0,395.6 140.9,394.4 141.8,388.1 142.7,393.0 143.6,393.1 144.5,395.8 145.4,386.1 146.3,390.9 147.2,392.3 148.1,389.2 149.0,388.6 149.9,393.6 150.8,392.3 151.7,391.4 152.6,397.3 153.5,391.0 154.4,391.9 155.3,390.4 156.2,391.0 157.1,394.2 158.0,390.9 158.9,390.6 159.8,394.0 160.7,398.1 161.6,394.4 162.5,392.1 163.4,394.5 164.3,394.5 165.2,388.2 166.1,392.9 167.0,389.1 167.9,391.6 168.8,392.5 169.7,393.0 170.6,388.3 171.5,391.9 172.4,389.4 173.3,391.6 174.2,394.9 175.1,396.0 176.0,391.7 176.9,387.0 177.8,392.8 178.7,393.9 179.6,393.4 180.5,395.1 181.4,395.7 182.3,389.9 183.2,389.1 184.1,393.9 185.0,396.0 185.9,396.0 186.8,389.4 187.7,395.2 188.6,393.3 189.5,393.6 190.4,394.7 191.3,395.2 192.2,386.0 193.1,393.1 194.0,394.5 194.9,387.7 195.8,390.1 196.7,391.1 197.6,392.8 198.5,388.3 199.4,391.3 200.3,390.4 201.2,390.6 202.1,390.0 203.0,394.3 203.9,397.4 204.8,390.8 205.7,391.4 206.6,392.6 207.5,395.5 208.4,394.0 209.3,392.9 210.2,390.9 211.1,393.1 212.0,395.1 212.9,392.6 213.8,390.9 214.7,392.2 215.6,395.5 216.5,389.7 217.4,392.4 218.3,392.9 219.2,387.0 220.1,393.5 221.0,390.3 221.9,390.3 222.8,394.0 223.7,391.7 224.6,390.9 225.5,390.3 226.4,391.5 227.3,388.5 228.2,392.8 229.1,392.7 230.0,393.7 230.9,392.1 231.8,394.0 232.7,391.1 233.6,391.1 234.5,390.6 235.4,396.3 236.3,392.7 237.2,391.5 238.1,388.1 239.0,392.7 239.9,390.0 240.8,387.0 241.7,391.9 242.6,392.1 243.5,393.6 244.4,395.4 245.3,389.9 246.2,392.0 247.1,392.2 248.0,386.6 248.9,395.0 249.8,391.6 250.7,394.5 251.6,387.5 252.5,391.3 253.4,392.9 254.3,392.3 255.2,387.9 256.1,397.6 257.0,386.5 257.9,389.5 258.8,392.9 259.7,389.4 260.6,392.0 261.5,391.9 262.4,390.6 263.3,389.3 264.2,391.2 265.1,386.2 266.0,390.5 266.9,395.0 267.8,394.2 268.7,389.8 269.6,391.0 270.5,393.2 271.4,390.8 272.3,395.7 273.2,389.0 274.1,394.0 275.0,391.9 275.9,389.5 276.8,389.3 277.7,391.4 278.6,390.9 279.5,386.0 280.4,393.1 281.3,394.0 282.2,388.1 283.1,391.4 284.0,390.9 284.9,391.5 285.8,389.2 286.7,389.1 287.6,390.0 288.5,390.4 289.4,397.4 290.3,391.7 291.2,390.7 292.1,394.6 293.0,386.2 293.9,389.8 294.8,390.0 295.7,384.7 296.6,393.8 297.5,390.0 298.4,392.0 299.3,388.0 300.2,389.3 301.1,391.0 302.0,391.2 302.9,393.5 303.8,384.7 304.7,384.9 305.6,393.6 306.5,390.1 307.4,396.6 308.3,392.0 309.2,387.0 310.1,391.7 311.0,393.0 311.9,389.8 312.8,389.4 313.7,389.4 314.6,391.4 315.5,388.1 316.4,399.0 317.3,392.6 318.2,391.0 319.1,390.0 320.0,392.6 320.9,392.6 321.8,393.9 322.7,392.3 323.6,390.4 324.5,389.4 325.4,388.1 326.3,391.5 327.2,391.8 328.1,389.7 328.5,393.6 328.5,412.7 387.5,412.7 388.7,393.5 388.4,391.4 389.3,390.3 390.2,388.5 391.1,388.3 392.0,389.5 392.9,391.6 393.8,391.5 394.7,389.0 395.6,384.6 396.5,386.7 397.4,388.9 398.3,386.6 399.2,389.9 400.1,388.1 401.0,389.4 401.9,392.2 402.8,388.4 403.7,387.3 404.6,388.0 405.5,390.0 406.4,385.3 407.3,387.4 408.2,387.1 409.1,386.1 410.0,386.3 410.9,384.0 411.8,390.6 412.7,389.4 413.6,386.9 414.5,387.4 415.4,389.8 416.3,390.3 417.2,387.0 418.1,392.5 419.0,390.4 419.9,390.1 420.8,389.3 421.7,388.8 422.6,388.3 423.5,394.2 424.4,391.2 425.3,386.1 426.2,387.6 427.1,385.5 428.0,386.9 428.9,389.6 429.8,389.7 430.7,388.7 431.6,387.1 432.5,388.5 433.4,391.1 434.3,390.0 435.2,391.1 436.1,390.1 437.0,393.7 437.9,391.0 438.8,392.7 439.7,384.3 440.6,392.5 441.5,389.8 442.4,392.8 443.3,386.4 443.5,388.8 443.5,412.7 491.5,412.7 492.7,393.5 492.4,388.0 493.3,387.4 494.2,388.0 495.1,388.9 496.0,391.1 496.9,389.0 497.8,391.1 498.7,391.3 499.6,388.4 500.5,387.1 501.4,388.5 502.3,387.3 503.2,388.7 504.1,390.7 505.0,390.5 505.9,388.5 506.8,390.3 507.0,388.8 507.0,412.7 558.0,412.7 559.2,393.5 558.9,388.6 559.8,388.0 560.7,390.9 561.6,386.9 562.5,385.4 563.4,385.9 564.3,391.6 565.2,385.8 566.1,388.0 567.0,387.6 567.9,386.9 568.8,390.8 569.7,389.0 570.6,385.9 571.5,384.5 572.4,388.7 573.3,387.2 574.2,387.8 575.1,391.3 576.0,388.4 576.9,387.5 577.8,390.3 578.7,387.9 579.6,389.3 580.5,391.5 581.4,389.5 582.3,386.9 583.2,386.9 584.1,389.2 585.0,390.9 585.9,390.8 586.8,387.2 587.7,389.0 588.6,389.1 589.5,388.5 590.4,381.4 591.3,388.3 592.2,390.2 593.1,390.8 594.0,386.7 594.9,391.4 595.8,386.6 596.7,389.0 597.6,390.8 598.5,389.1 599.4,390.8 600.3,388.1 601.2,388.0 602.1,387.8 603.0,386.6 603.9,387.4 604.8,387.9 605.7,389.5 606.6,388.3 607.5,392.1 608.4,389.0 609.3,390.3 610.2,384.6 611.1,390.8 612.0,395.0 612.9,389.1 613.8,389.0 614.7,389.4 615.6,389.6 616.5,387.7 617.4,392.9 618.3,388.2 619.2,393.7 619.3,388.8" stroke="#bc0c0c" stroke-width=".75" fill="none"/>
</svg>
<!-- status boxes -->
<!-- buttons -->
<div class="btn" style="left:6px;width:53px;background:#cccccc;border-color:#bfbfbf"></div>
<div class="btn" style="left:66px;width:53px"></div>
<div class="btn" style="left:143px;width:53px"></div>
<div class="btn" style="left:202px;width:53px"></div>
<div class="btn" style="left:279px;width:53px"></div>
<div class="btn" style="left:338px;width:53px"></div>
<div class="btn" style="left:619.500px;width:52px;background:#c8c8c8;border-color:#c0c0c0"></div>
<span class="t" id="t0" style="left:21.00px;top:6.09px;font-size:10.8px;line-height:12.42px;color:#fff;transform:scaleX(1.0273);">System Stability Test - AIDA64</span>
<span class="t" id="t1" style="left:45.60px;top:42.17px;font-size:11px;line-height:12.65px;color:#000;transform:scaleX(0.8265);">Stress CPU</span>
<span class="t" id="t2" style="left:45.60px;top:57.28px;font-size:11px;line-height:12.65px;color:#000;transform:scaleX(0.8180);">Stress FPU</span>
<span class="t" id="t3" style="left:45.60px;top:72.17px;font-size:11px;line-height:12.65px;color:#000;transform:scaleX(0.8491);">Stress cache</span>
<span class="t" id="t4" style="left:45.60px;top:86.77px;font-size:11px;line-height:12.65px;color:#000;transform:scaleX(0.9029);">Stress system memory</span>
<span class="t" id="t5" style="left:45.60px;top:101.47px;font-size:11px;line-height:12.65px;color:#000;transform:scaleX(0.8778);">Stress local disks</span>
<span class="t" id="t6" style="left:45.60px;top:116.27px;font-size:11px;line-height:12.65px;color:#000;transform:scaleX(0.8321);">Stress GPU(s)</span>
<span class="t" id="t7" style="left:137.80px;top:45.58px;font-size:11px;line-height:12.65px;color:#000;z-index:3;transform:scaleX(0.9417);">Date & Time</span>
<span class="t" id="t8" style="left:248.00px;top:45.58px;font-size:11px;line-height:12.65px;color:#000;z-index:3;transform:scaleX(0.8978);">Status</span>
<span class="t" id="t9" style="left:137.80px;top:61.67px;font-size:11px;line-height:12.65px;color:#000;z-index:3;transform:scaleX(0.9176);">2019/12/1 20:31:26</span>
<span class="t" id="t10" style="left:248.00px;top:61.67px;font-size:11px;line-height:12.65px;color:#000;z-index:3;transform:scaleX(0.9115);">Stability Test: Started</span>
<span class="t" id="t11" style="left:24.20px;top:139.08px;font-size:11px;line-height:12.65px;color:#000;transform:scaleX(0.9069);">Temperatures</span>
<span class="t" id="t12" style="left:96.50px;top:140.98px;font-size:11px;line-height:12.65px;color:#000;transform:scaleX(0.8947);">Cooling Fans</span>
<span class="t" id="t13" style="left:165.00px;top:140.98px;font-size:11px;line-height:12.65px;color:#000;transform:scaleX(0.9241);">Voltages</span>
<span class="t" id="t14" style="left:214.50px;top:140.98px;font-size:11px;line-height:12.65px;color:#000;transform:scaleX(0.8722);">Powers</span>
<span class="t" id="t15" style="left:257.50px;top:140.98px;font-size:11px;line-height:12.65px;color:#000;transform:scaleX(0.8784);">Clocks</span>
<span class="t" id="t16" style="left:300.50px;top:140.98px;font-size:11px;line-height:12.65px;color:#000;transform:scaleX(0.9343);">Unified</span>
<span class="t" id="t17" style="left:344.00px;top:140.98px;font-size:11px;line-height:12.65px;color:#000;transform:scaleX(0.8747);">Statistics</span>
<span class="t" id="t18" style="left:18.00px;top:452.68px;font-size:11px;line-height:12.65px;color:#000;transform:scaleX(0.9086);">Remaining Battery:</span>
<span class="t" id="t19" style="left:172.00px;top:452.68px;font-size:11px;line-height:12.65px;color:#000;transform:scaleX(0.8905);">Test Started:</span>
<span class="t" id="t20" style="left:342.00px;top:452.68px;font-size:11px;line-height:12.65px;color:#000;transform:scaleX(0.8895);">Elapsed Time:</span>
<span class="t" id="t21" style="left:128.00px;top:453.19px;font-size:6.8px;line-height:7.82px;color:#10dc10;-webkit-text-stroke:.25px #10dc10;transform:scaleX(1.0147);">Charging</span>
<span class="t" id="t22" style="left:259.50px;top:453.19px;font-size:6.8px;line-height:7.82px;color:#10dc10;-webkit-text-stroke:.25px #10dc10;transform:scaleX(1.0069);">2019/12/1 20:31:26</span>
<span class="t" id="t23" style="left:431.00px;top:453.19px;font-size:6.8px;line-height:7.82px;color:#10dc10;-webkit-text-stroke:.25px #10dc10;transform:scaleX(0.9445);">00:20:49</span>
<span class="t" id="t24" style="left:23.00px;top:485.57px;font-size:11px;line-height:12.65px;color:#838383;transform:scaleX(0.9462);"><u>S</u>tart</span>
<span class="t" id="t25" style="left:82.50px;top:485.57px;font-size:11px;line-height:12.65px;color:#000;transform:scaleX(0.9269);">S<u>t</u>op</span>
<span class="t" id="t26" style="left:158.50px;top:485.57px;font-size:11px;line-height:12.65px;color:#000;transform:scaleX(0.8746);">Cl<u>e</u>ar</span>
<span class="t" id="t27" style="left:219.00px;top:485.57px;font-size:11px;line-height:12.65px;color:#000;transform:scaleX(0.8767);">S<u>a</u>ve</span>
<span class="t" id="t28" style="left:291.50px;top:485.57px;font-size:11px;line-height:12.65px;color:#000;transform:scaleX(0.8763);">CP<u>U</u>ID</span>
<span class="t" id="t29" style="left:340.00px;top:485.57px;font-size:11px;line-height:12.65px;color:#000;transform:scaleX(0.8765);"><u>P</u>references</span>
<span class="t" id="t30" style="left:171.60px;top:163.19px;font-size:9.4px;line-height:10.81px;color:#8aa8d2;transform:scaleX(0.8486);">CPU</span>
<span class="t" id="t31" style="left:211.20px;top:163.19px;font-size:9.4px;line-height:10.81px;color:#00c400;transform:scaleX(0.9181);">CPU Core #1</span>
<span class="t" id="t32" style="left:285.30px;top:163.19px;font-size:9.4px;line-height:10.81px;color:#00b4c8;transform:scaleX(0.9235);">CPU Core #2</span>
<span class="t" id="t33" style="left:359.70px;top:163.19px;font-size:9.4px;line-height:10.81px;color:#d030d4;transform:scaleX(0.9253);">CPU Core #3</span>
<span class="t" id="t34" style="left:434.00px;top:163.19px;font-size:9.4px;line-height:10.81px;color:#cfd8cf;transform:scaleX(0.9253);">CPU Core #4</span>
<span class="t" id="t35" style="left:508.20px;top:163.19px;font-size:9.4px;line-height:10.81px;color:#e01818;transform:scaleX(1.0000);">DIMM</span>
<span class="t" id="t36" style="left:272.00px;top:182.50px;font-size:9.4px;line-height:10.81px;color:#e0a868;transform:scaleX(0.9218);">KBG40ZPZ512G NVMe TOSHIBA 512GB</span>
<span class="t" id="t37" style="left:51.00px;top:196.09px;font-size:9.4px;line-height:10.81px;color:#e8e8e8;transform:scaleX(0.9581);">100</span>
<span class="t" id="t38" style="left:66.50px;top:193.00px;font-size:9.4px;line-height:10.81px;color:#e8e8e8;transform:scaleX(1.0667);">°</span>
<span class="t" id="t39" style="left:69.20px;top:196.09px;font-size:9.4px;line-height:10.81px;color:#e8e8e8;transform:scaleX(0.9143);">C</span>
<span class="t" id="t40" style="left:60.00px;top:264.60px;font-size:9.4px;line-height:10.81px;color:#e8e8e8;transform:scaleX(0.9581);">0</span>
<span class="t" id="t41" style="left:66.50px;top:261.60px;font-size:9.4px;line-height:10.81px;color:#e8e8e8;transform:scaleX(1.0667);">°</span>
<span class="t" id="t42" style="left:69.20px;top:264.60px;font-size:9.4px;line-height:10.81px;color:#e8e8e8;transform:scaleX(0.9143);">C</span>
<span class="t" id="t43" style="left:419.20px;top:274.50px;font-size:9.4px;line-height:10.81px;color:#e8e8e8;transform:scaleX(0.9589);">20:31:26</span>
<span class="t" id="t44" style="left:635.50px;top:195.40px;font-size:9.4px;line-height:10.81px;color:#5080ff;transform:scaleX(1.0060);">99</span>
<span class="t" id="t45" style="left:635.00px;top:196.79px;font-size:9.4px;line-height:10.81px;color:#e040e0;transform:scaleX(1.0060);">99</span>
<span class="t" id="t46" style="left:635.50px;top:196.19px;font-size:9.4px;line-height:10.81px;color:#00d8e8;opacity:.8;transform:scaleX(1.0060);">99</span>
<span class="t" id="t47" style="left:623.00px;top:201.90px;font-size:9.4px;line-height:10.81px;color:#00e000;transform:scaleX(1.0060);">92</span>
<span class="t" id="t48" style="left:635.00px;top:201.90px;font-size:9.4px;line-height:10.81px;color:#d8d8d8;transform:scaleX(1.0060);">92</span>
<span class="t" id="t49" style="left:623.00px;top:225.29px;font-size:9.4px;line-height:10.81px;color:#f02828;transform:scaleX(1.0060);">58</span>
<span class="t" id="t50" style="left:635.00px;top:227.00px;font-size:9.4px;line-height:10.81px;color:#e8b878;transform:scaleX(1.0060);">55</span>
<span class="t" id="t51" style="left:208.00px;top:306.10px;font-size:9.4px;line-height:10.81px;color:#e8e800;transform:scaleX(0.9192);">CPU Usage</span>
<span class="t" id="t52" style="left:257.50px;top:305.60px;font-size:9.4px;line-height:10.81px;color:#e8e8e8;transform:scaleX(0.8205);">|</span>
<span class="t" id="t53" style="left:265.00px;top:306.10px;font-size:9.4px;line-height:10.81px;color:#f00000;transform:scaleX(0.9674);">CPU Throttling (max: 40%) - Overheating Detected!</span>
<span class="t" id="t54" style="left:34.80px;top:320.20px;font-size:9.4px;line-height:10.81px;color:#e8e8e8;transform:scaleX(0.9089);">100%</span>
<span class="t" id="t55" style="left:44.30px;top:408.60px;font-size:9.4px;line-height:10.81px;color:#e8e8e8;transform:scaleX(0.9217);">0%</span>
<span class="t" id="t56" style="left:622.50px;top:319.60px;font-size:9.4px;line-height:10.81px;color:#d4d400;transform:scaleX(0.9423);">100%</span>
<span class="t" id="t57" style="left:622.50px;top:386.30px;font-size:9.4px;line-height:10.81px;color:#d40808;transform:scaleX(0.9379);">25%</span>
<!-- watermark -->
<div class="abs" style="left:556.200px;top:476.400px;width:22.400px;height:22.400px;border-radius:50%;background:rgba(255,255,255,.93);box-shadow:0 0 1.500px rgba(0,0,0,.18)"></div>
<span class="t" style="left:559.900px;top:478.600px;font-size:15px;line-height:18px;color:#bcbcbc;font-family:'Liberation Sans','Noto Sans CJK SC',sans-serif;font-weight:bold">值</span>
<span class="t" style="left:586.800px;top:475.500px;font-size:17.400px;line-height:26px;color:rgba(255,255,255,.97);font-family:'Liberation Sans','Noto Sans CJK SC',sans-serif;font-weight:bold;letter-spacing:0px;text-shadow:.8px .8px 1.200px rgba(0,0,0,.38)">什么值得买</span>
</body></html>
